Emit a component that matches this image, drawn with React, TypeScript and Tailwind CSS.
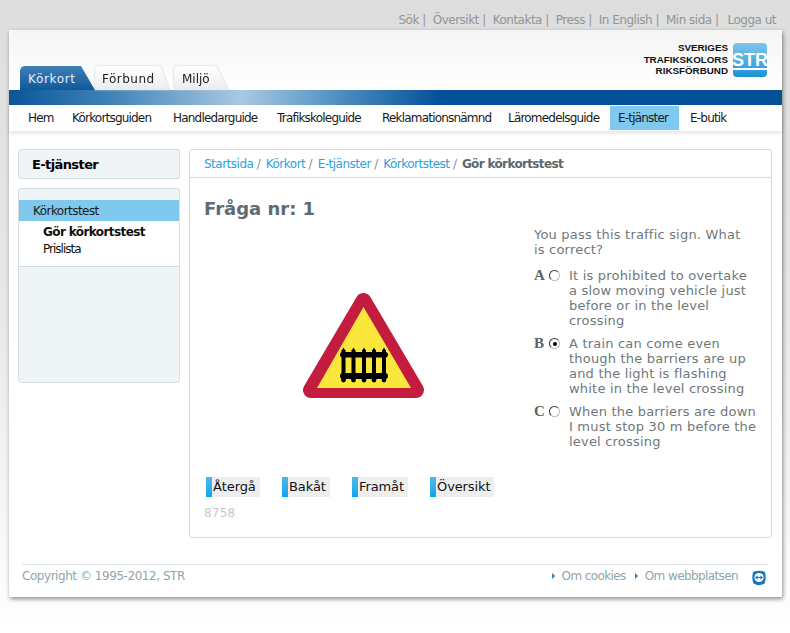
const topLinks = ['Sök', 'Översikt', 'Kontakta', 'Press', 'In English', 'Min sida'];
const navItems = [
  { label: 'Hem', w: 'w-[44px]' },
  { label: 'Körkortsguiden', w: 'w-[101px]' },
  { label: 'Handledarguide', w: 'w-[104px]' },
  { label: 'Trafikskoleguide', w: 'w-[105px]' },
  { label: 'Reklamationsnämnd', w: 'w-[126px]' },
  { label: 'Läromedelsguide', w: 'w-[110px]' },
  { label: 'E-tjänster', w: 'w-[69px]', active: true },
  { label: 'E-butik', w: 'w-[61px] ml-[3px]' },
];
const crumbs = ['Startsida', 'Körkort', 'E-tjänster', 'Körkortstest'];
const answers = [
  { key: 'A', text: 'It is prohibited to overtake a slow moving vehicle just before or in the level crossing' },
  { key: 'B', text: 'A train can come even though the barriers are up and the light is flashing white in the level crossing', checked: true },
  { key: 'C', text: 'When the barriers are down I must stop 30 m before the level crossing' },
];
const buttons = [
  { label: 'Återgå', w: 'w-[54px]' },
  { label: 'Bakåt', w: 'w-[48px]' },
  { label: 'Framåt', w: 'w-[56px]' },
  { label: 'Översikt', w: 'w-[64px]' },
];

function Sign() {
  const pickets = [40.5, 50.5, 61, 71, 81];
  return (
    <svg width="122" height="108" viewBox="0 0 122 108">
      <polygon points="60.5,9 8,98 113,98" fill="#c41c3f" stroke="#c41c3f" strokeWidth="16" strokeLinejoin="round" />
      <polygon points="60.5,15 14,96 108,96" fill="#fbe63c" />
      {pickets.map(x => (
        <g key={x} fill="#000">
          <rect x={x - 2} y="58" width="4" height="30" />
          <polygon points={`${x - 2},59 ${x},55.5 ${x + 2},59`} />
          <circle cx={x} cy="88" r="2.4" />
        </g>
      ))}
      <rect x="37" y="60" width="48" height="5.5" rx="2.7" fill="#000" />
      <rect x="37" y="81" width="48" height="6" rx="3" fill="#000" />
    </svg>
  );
}

function TeamViewerIcon() {
  return (
    <svg width="14" height="16" viewBox="0 0 14 16">
      <path d="M1 2 Q7 -0.5 13 2 Q14.5 9 12.5 13.5 Q7 17 1.5 13.5 Q-0.5 9 1 2Z" fill="#1478c4" />
      <circle cx="7" cy="7.5" r="4.6" fill="#fff" />
      <path d="M3 7.5 L5.6 5.2 V6.9 H8.4 V5.2 L11 7.5 L8.4 9.8 V8.1 H5.6 V9.8Z" fill="#1478c4" />
    </svg>
  );
}

function Bullet({ className }: { className: string }) {
  return <span className={`w-0 h-0 border-y-[3px] border-y-transparent border-l-[3px] border-l-[#2a7fb5] ${className}`} />;
}

export default function App() {
  return (
    <div className="w-[790px] h-[633px] overflow-hidden bg-gradient-to-b from-[#dddddd] via-[#e8e8e8] to-[#ffffff] font-['DejaVu_Sans',sans-serif]">
      <div className="h-[30px] flex justify-end items-center pr-[14px] pt-[9px] text-[12px] tracking-[-0.5px] text-[#8f9598]">
        {topLinks.map(l => (
          <span key={l} className="mr-[7px]">{l} |</span>
        ))}
        <span className="ml-[2px]">Logga ut</span>
      </div>

      <div className="ml-[9px] w-[773px] h-[567px] rounded-t-[2px] bg-white shadow-[1px_2px_4px_rgba(0,0,0,0.45)] flex flex-col">
        <div className="h-[60px] flex justify-between bg-gradient-to-b from-[#f5f5f5] to-white">
          <div className="flex items-end pl-[11px]">
            <div className="w-[75px] h-[24px] pl-[8px] pt-[4px] text-[12px] tracking-[0.65px] text-[#e6eef5] rounded-tl-[5px] bg-gradient-to-b from-[#3f7fb5] to-[#0b5a9c] [clip-path:polygon(0_0,61px_0,100%_100%,0_100%)]">
              Körkort
            </div>
            <div className="[filter:drop-shadow(0_0_1px_#c8c8c8)]">
              <div className="w-[75px] h-[24px] pl-[7px] pt-[4px] text-[12px] tracking-[0.5px] text-[#222] rounded-tl-[4px] bg-gradient-to-b from-white to-[#e9ecee] [clip-path:polygon(0_0,65px_0,100%_100%,0_100%)]">
                Förbund
              </div>
            </div>
            <div className="ml-[4px] [filter:drop-shadow(0_0_1px_#c8c8c8)]">
              <div className="w-[55px] h-[24px] pl-[8px] pt-[4px] text-[12px] text-[#222] rounded-tl-[4px] bg-gradient-to-b from-white to-[#e9ecee] [clip-path:polygon(0_0,42px_0,100%_100%,0_100%)]">
                Miljö
              </div>
            </div>
          </div>
          <div className="flex items-start pt-[12px] pr-[15px] gap-[1px]">
            <div className="text-right font-['Liberation_Sans',sans-serif] font-bold text-[9.8px] leading-[11.5px] text-[#111]">
              <div>SVERIGES</div>
              <div>TRAFIKSKOLORS</div>
              <div>RIKSFÖRBUND</div>
            </div>
            <div className="w-[34px] h-[34px] ml-[4px] mt-[1px] pb-[7px] rounded-[4px] bg-gradient-to-b from-[#7cc6ee] to-[#1592d8] flex flex-col items-center justify-end font-['Liberation_Sans',sans-serif] font-bold text-[18px] leading-[15px] text-white">
              <span className="border-b-2 border-white">STR</span>
            </div>
          </div>
        </div>

        <div className="h-[15px] bg-[linear-gradient(90deg,#0b5699_0px,#3f82b8_100px,#a9c9e2_232px,#4f8fc0_330px,#045099_430px,#045099_100%)]" />

        <div className="h-[26px] flex items-start pl-[11px] pt-[1px] text-[12px] tracking-[-0.8px] text-[#1a1a1a] shadow-[0_2px_4px_rgba(0,0,0,0.12)]">
          {navItems.map(n => (
            <div
              key={n.label}
              className={`${n.w} h-[24px] flex items-center pl-[8px] pb-[1px] ${n.active ? 'bg-[#7fc8ee]' : ''}`}
            >
              {n.label}
            </div>
          ))}
        </div>

        <div className="flex-1 flex pl-[9px] pt-[18px] gap-[9px]">
          <div className="w-[162px] flex flex-col gap-[9px]">
            <div className="h-[30px] rounded-[3px] border border-[#d5dde2] bg-[#f0f4f7] flex items-center pl-[13px] pt-[1px] text-[13px] font-bold tracking-[-0.6px] text-black">
              E-tjänster
            </div>
            <div className="h-[195px] rounded-[3px] border border-[#d5dfe5] bg-[#eff4f7] flex flex-col pt-[11px]">
              <div className="h-[21px] bg-[#7fc8ee] flex items-center pl-[14px] text-[12px] tracking-[-0.55px] text-[#1a1a1a]">
                Körkortstest
              </div>
              <div className="h-[46px] bg-white border-b border-[#d5dde2] pl-[24px] pt-[2px]">
                <div className="text-[12px] leading-[18px] font-bold tracking-[-0.6px] text-[#111]">Gör körkortstest</div>
                <div className="text-[12px] leading-[17px] tracking-[-1px] text-[#111]">Prislista</div>
              </div>
            </div>
          </div>

          <div className="w-[583px] h-[389px] rounded-[3px] border border-[#d4d9dc] flex flex-col">
            <div className="h-[28px] border-b border-[#d4d9dc] flex items-center pl-[14px] text-[12px] tracking-[-0.5px] text-[#8a9296]">
              {crumbs.map(c => (
                <span key={c} className="mr-[5.5px]">
                  <span className="text-[#29a3dc]">{c}</span> /
                </span>
              ))}
              <span className="font-bold tracking-[-0.65px] text-[#5d676c]">Gör körkortstest</span>
            </div>

            <div className="flex-1 px-[14px] pt-[20px] flex flex-col">
              <div className="h-[22px] text-[18px] leading-[22px] font-bold text-[#5f6b72]">Fråga nr: 1</div>
              <div className="h-[258px] flex">
                <div className="w-[320px] shrink-0 flex justify-center pt-[72px]">
                  <div><Sign /></div>
                </div>
                <div className="ml-[10px] flex-1 min-w-0 pt-[7px] text-[13px] leading-[15px] text-[#6f777b] tracking-[0.2px]">
                  <p className="w-[215px] mb-[11px]">You pass this traffic sign. What is correct?</p>
                  <div className="flex flex-col gap-[8px]">
                    {answers.map(a => (
                      <div key={a.key} className="flex">
                        <span className="w-[15px] shrink-0 font-['Liberation_Serif',serif] font-bold text-[15px] text-[#5c6468]">{a.key}</span>
                        <span className="w-[11px] h-[11px] shrink-0 mt-[2px] rounded-full border border-t-[#333] border-l-[#333] border-r-[#bbb] border-b-[#bbb] flex items-center justify-center bg-white">
                          {a.checked && <span className="w-[4px] h-[4px] rounded-full bg-black" />}
                        </span>
                        <span className="ml-[9px] w-[190px] shrink-0">{a.text}</span>
                      </div>
                    ))}
                  </div>
                </div>
              </div>

              <div className="flex gap-[22px] pl-[2px] mt-[-1px]">
                {buttons.map(b => (
                  <div key={b.label} className={`${b.w} h-[20px] bg-[#eeeeee] flex items-center text-[13px] tracking-[-0.1px] text-[#111]`}>
                    <span className="w-[6px] h-[20px] bg-gradient-to-b from-[#4db8ea] to-[#00a5ee] mr-[1px]" />
                    {b.label}
                  </div>
                ))}
              </div>
              <div className="mt-[8px] text-[12px] leading-[16px] tracking-[0.2px] text-[#c8c8c8]">8758</div>
            </div>
          </div>
        </div>

        <div className="mx-[13px] mb-[10px] h-[23px] border-t border-[#e3e6e8] flex items-center justify-between text-[12px] tracking-[-0.45px] text-[#8ea5ae]">
          <span>Copyright © 1995-2012, STR</span>
          <div className="flex items-center tracking-[-0.6px]">
            <Bullet className="mr-[7px]" />
            <span className="mr-[9px]">Om cookies</span>
            <Bullet className="mr-[7px]" />
            <span>Om webbplatsen</span>
            <span className="ml-[14px] mr-[3px] mt-[3px] flex"><TeamViewerIcon /></span>
          </div>
        </div>
      </div>
    </div>
  );
}
